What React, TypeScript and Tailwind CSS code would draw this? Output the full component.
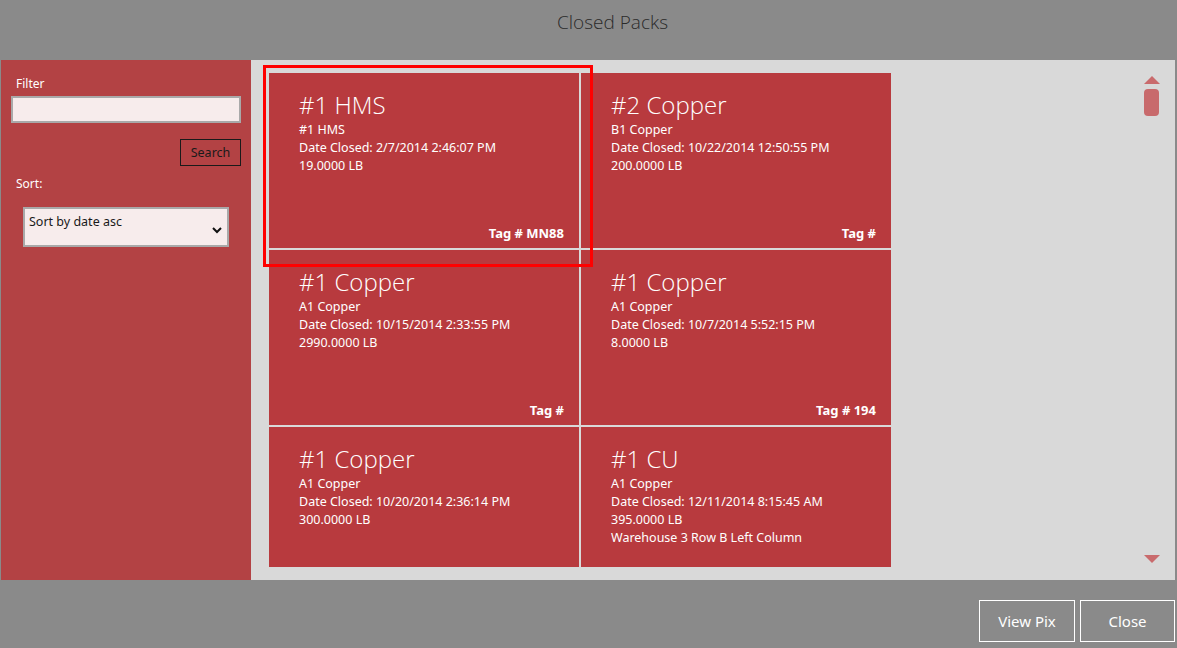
import React from 'react';

type Pack = {
  title: string;
  grade: string;
  closed: string;
  weight: string;
  location?: string;
  tag?: string;
};

const packs: Pack[] = [
  { title: '#1 HMS', grade: '#1 HMS', closed: '2/7/2014 2:46:07 PM', weight: '19.0000 LB', tag: 'Tag # MN88' },
  { title: '#2 Copper', grade: 'B1 Copper', closed: '10/22/2014 12:50:55 PM', weight: '200.0000 LB', tag: 'Tag #' },
  { title: '#1 Copper', grade: 'A1 Copper', closed: '10/15/2014 2:33:55 PM', weight: '2990.0000 LB', tag: 'Tag #' },
  { title: '#1 Copper', grade: 'A1 Copper', closed: '10/7/2014 5:52:15 PM', weight: '8.0000 LB', tag: 'Tag # 194' },
  { title: '#1 Copper', grade: 'A1 Copper', closed: '10/20/2014 2:36:14 PM', weight: '300.0000 LB' },
  { title: '#1 CU', grade: 'A1 Copper', closed: '12/11/2014 8:15:45 AM', weight: '395.0000 LB', location: 'Warehouse 3 Row B Left Column' },
];

function PackTile({ pack }: { pack: Pack }) {
  return (
    <div className="flex flex-col bg-[#b83a3e] pl-[30px] pr-[15px] pt-[17px] pb-[6px] text-white overflow-hidden">
      <div className="text-[24px] leading-[30px] font-light font-['Open_Sans',sans-serif]">{pack.title}</div>
      <div className="mt-[1px] text-[12.5px] leading-[18px]">
        <div>{pack.grade}</div>
        <div>Date Closed: {pack.closed}</div>
        <div>{pack.weight}</div>
        {pack.location && <div>{pack.location}</div>}
      </div>
      {pack.tag && (
        <div className="mt-auto text-right text-[13px] leading-[18px] font-bold">{pack.tag}</div>
      )}
    </div>
  );
}

export default function App() {
  return (
    <div
      className="w-[1177px] h-[648px] bg-[#8a8a8a] flex flex-col overflow-hidden"
      style={{ fontFamily: '"Noto Sans", "Open Sans", sans-serif' }}
    >
      {/* header */}
      <div className="h-[60px] flex items-start justify-center pt-[10px] pl-[48px]">
        <span className="text-[19px] leading-[24px] font-light text-[#2a2a2a] font-['Open_Sans',sans-serif]">Closed Packs</span>
      </div>

      {/* body */}
      <div className="h-[520px] flex pl-[1px] pr-[2px]">
        {/* filter panel */}
        <div className="w-[250px] bg-[#b34244] flex flex-col text-white">
          <label className="mt-[16px] ml-[15px] text-[12px] leading-[16px]">Filter</label>
          <input
            type="text"
            className="mt-[4px] ml-[10px] w-[230px] h-[27px] bg-[#f7ecec] border-2 border-[#a9a9a9] outline-none"
          />
          <div className="flex justify-end mt-[16px] pr-[10px]">
            <button className="w-[61px] h-[27px] border border-[#1a1a1a] text-[#1a1a1a] text-[12.5px] pt-[2px]">
              Search
            </button>
          </div>
          <label className="mt-[10px] ml-[15px] text-[12px] leading-[16px]">Sort:</label>
          <div className="relative mt-[15px] ml-[22px] w-[206px] h-[40px] bg-[#f7ecec] border-2 border-[#a9a9a9]">
            <span className="absolute left-[4px] top-[4px] text-[12.5px] text-[#1a1a1a]">Sort by date asc</span>
            <svg className="absolute right-[4px] top-[16px]" width="12" height="10" viewBox="0 0 12 10">
              <path d="M2 3 L6 7 L10 3" fill="none" stroke="#111" strokeWidth="2" />
            </svg>
          </div>
        </div>

        {/* tiles */}
        <div className="relative flex-1 bg-[#d9d9d9] overflow-hidden">
          <div className="grid grid-cols-[310px_310px] grid-rows-[175px_175px_140px] gap-[2px] pt-[13px] pl-[18px]">
            {packs.map((p, i) => (
              <PackTile key={i} pack={p} />
            ))}
          </div>

          {/* selection outline */}
          <div className="absolute left-[12px] top-[5px] w-[330px] h-[202px] border-[3px] border-[#ff0000] pointer-events-none" />

          {/* scrollbar */}
          <svg className="absolute left-[893px] top-[16px]" width="16" height="8" viewBox="0 0 16 8">
            <path d="M0 8 L8 0 L16 8 Z" fill="#c96b6d" />
          </svg>
          <div className="absolute left-[893px] top-[29px] w-[15px] h-[27px] rounded-[4px] bg-[#c86a6c]" />
          <svg className="absolute left-[893px] top-[495px]" width="16" height="8" viewBox="0 0 16 8">
            <path d="M0 0 L16 0 L8 8 Z" fill="#c96b6d" />
          </svg>
        </div>
      </div>

      {/* footer */}
      <div className="flex-1 flex justify-end items-start pt-[20px] pr-[2px] gap-[5px]">
        <button className="w-[96px] h-[42px] border border-white text-white text-[15px]">View Pix</button>
        <button className="w-[95px] h-[42px] border border-white text-white text-[15px]">Close</button>
      </div>
    </div>
  );
}
